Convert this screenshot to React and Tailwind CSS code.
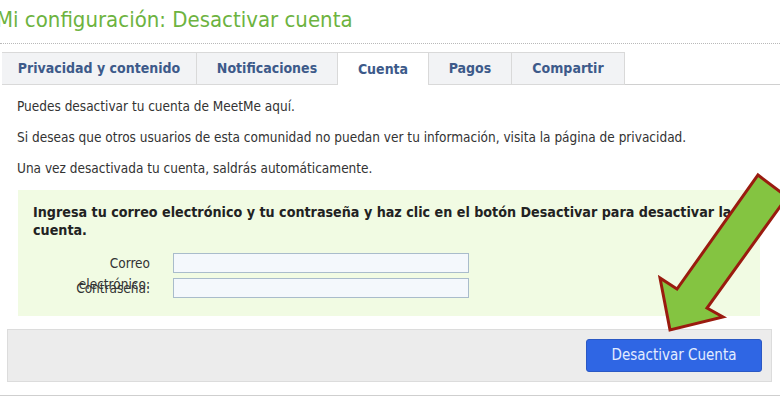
export default function App() {
  const tabs = [
    { label: 'Privacidad y contenido', w: 'w-[195px]' },
    { label: 'Notificaciones', w: 'w-[141px]' },
    { label: 'Cuenta', w: 'w-[91px]', active: true },
    { label: 'Pagos', w: 'w-[83px]' },
    { label: 'Compartir', w: 'w-[113px]' },
  ]

  return (
    <div className="relative w-[780px] h-[400px] overflow-hidden bg-white text-[#333] font-['DejaVu_Sans_Condensed','Liberation_Sans',sans-serif]">
      <div className="h-[44px] border-b border-dotted border-[#b9b9b9]">
        <h1 className="ml-[-4px] pt-[5px] text-[22px] leading-[30px] text-[#6db33f]">Mi configuración: Desactivar cuenta</h1>
      </div>

      <div className="mt-[8px] flex h-[33px] pl-[2px]">
        {tabs.map(t => (
          <div key={t.label}
            className={`${t.w} flex items-center justify-center text-[14px] font-bold text-[#3d5a8a] border-t border-r border-[#d9d9d9] ${t.active ? 'bg-white' : 'bg-[#f2f3f5] border-b'}`}>
            {t.label}
          </div>
        ))}
        <div className="flex-1 border-b border-[#d0d0d0]" />
      </div>

      <div className="pt-[6px] pl-[17px] text-[13.5px] leading-[31px]">
        <p>Puedes desactivar tu cuenta de MeetMe aquí.</p>
        <p>Si deseas que otros usuarios de esta comunidad no puedan ver tu información, visita la página de privacidad.</p>
        <p>Una vez desactivada tu cuenta, saldrás automáticamente.</p>
      </div>

      <div className="mt-[6px] ml-[18px] w-[742px] h-[126px] bg-[#f1fbe3] pt-[13px] pl-[15px] pr-[2px]">
        <p className="text-[14.2px] leading-[18px] font-bold text-[#222]">
          Ingresa tu correo electrónico y tu contraseña y haz clic en el botón Desactivar para desactivar la<br />cuenta.
        </p>
        <div className="mt-[14px] flex flex-col gap-[5px]">
          <div className="flex items-start">
            <label className="ml-[17px] w-[100px] h-[20px] text-right text-[13.5px] leading-[21px] text-[#333]">Correo electrónico:</label>
            <input className="ml-[23px] w-[296px] h-[20px] bg-[#f4f8fc] border border-[#a9bccb]" />
          </div>
          <div className="flex items-start">
            <label className="ml-[17px] w-[100px] h-[20px] text-right text-[13.5px] leading-[20px] text-[#333]">Contraseña:</label>
            <input type="password" className="ml-[23px] w-[296px] h-[20px] bg-[#f4f8fc] border border-[#a9bccb]" />
          </div>
        </div>
      </div>

      <div className="mt-[13px] ml-[7px] w-[765px] h-[53px] bg-[#ececec] border border-[#dcdcdc] flex items-center justify-end pr-[9px]">
        <button className="w-[176px] h-[33px] rounded-[3px] bg-[#2f66e4] border border-[#2a58c4] text-[15px] text-[#e3ecff]">
          Desactivar Cuenta
        </button>
      </div>

      <div className="mt-[13px] border-t border-[#cfcfcf]" />

      <svg className="absolute left-0 top-0 pointer-events-none" width="780" height="400" viewBox="0 0 780 400">
        <polygon
          points="758,175 787,197 707,308 723,317 670,330 660,278 677,289"
          fill="#84c441" stroke="#9a1b0f" strokeWidth="3" strokeLinejoin="miter" />
      </svg>
    </div>
  )
}
